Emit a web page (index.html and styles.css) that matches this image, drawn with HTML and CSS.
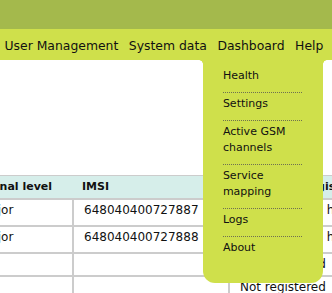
FILE: index.html
```html
<!DOCTYPE html>
<html lang="en">
<head>
    <meta charset="UTF-8">
    <meta name="viewport" content="width=device-width, initial-scale=1.0">
    <title>Channels</title>
    <link rel="stylesheet" href="styles.css">
</head>
<body>
<div class="topBar"></div>
<ul class="mainNav">
    <li class="navItem">User Management</li>
    <li class="navItem">System data</li>
    <li class="navItem hasMenu">Dashboard
        <ul class="dropMenu">
            <li class="dropItem">Health</li>
            <li class="dropItem">Settings</li>
            <li class="dropItem">Active GSM channels</li>
            <li class="dropItem">Service mapping</li>
            <li class="dropItem">Logs</li>
            <li class="dropItem">About</li>
        </ul>
    </li>
    <li class="navItem">Help</li>
</ul>
<div class="content">
    <table class="channelTable">
        <colgroup>
            <col class="colSignal">
            <col class="colImsi">
            <col class="colState">
        </colgroup>
        <tr>
            <th>Signal level</th>
            <th>IMSI</th>
            <th>Operators registration</th>
        </tr>
        <tr class="tallRow">
            <td>Major</td>
            <td>648040400727887</td>
            <td>Registered on home network</td>
        </tr>
        <tr class="tallRow">
            <td>Major</td>
            <td>648040400727888</td>
            <td>Registered on home network</td>
        </tr>
        <tr class="shortRow">
            <td></td>
            <td></td>
            <td>Not registered</td>
        </tr>
        <tr class="shortRow">
            <td></td>
            <td></td>
            <td>Not registered</td>
        </tr>
    </table>
</div>
</body>
</html>
```

FILE: styles.css
```css
body{
    margin: 0;
    background-color: white;
    font-family: "DejaVu Sans", Verdana, sans-serif;
    color: #111;
    overflow: hidden;
}
.topBar{
    height: 29px;
    background-color: #a4b94c;
}
.mainNav{
    display: flex;
    margin: 0;
    padding: 0;
    list-style: none;
    height: 31px;
    background-color: #cfe04b;
}
.navItem{
    position: relative;
    padding: 2px 5.5px 0 4.5px;
    margin-right: 0.5px;
    font-size: 12.4px;
    line-height: 29px;
    white-space: nowrap;
}
.dropMenu{
    position: absolute;
    z-index: 2;
    top: 31px;
    left: -10px;
    width: 79px;
    margin: 0;
    padding: 5px 21px 19px 20px;
    list-style: none;
    background-color: #cfe04b;
    border-radius: 0 0 12px 12px;
}
.dropMenu::before,
.dropMenu::after{
    content: "";
    position: absolute;
    top: 0;
    width: 4px;
    height: 4px;
}
.dropMenu::before{
    left: -4px;
    background: radial-gradient(circle at 0 100%, transparent 3.5px, #cfe04b 4px);
}
.dropMenu::after{
    right: -4px;
    background: radial-gradient(circle at 100% 100%, transparent 3.5px, #cfe04b 4px);
}
.dropItem{
    padding: 3px 0 8px 0;
    font-size: 11px;
    line-height: 16px;
    white-space: normal;
    border-bottom: 1px dotted #6f7150;
}
.dropItem:last-child{
    border-bottom: none;
}
.content{
    overflow: hidden;
    padding-top: 115px;
}
.channelTable{
    margin-left: -30px;
    table-layout: fixed;
    width: 420px;
    border-collapse: separate;
    border-spacing: 0;
}
.colSignal{
    width: 102px;
}
.colImsi{
    width: 156px;
}
.channelTable th{
    padding: 0 10px;
    font-size: 11px;
    line-height: 22px;
    text-align: left;
    white-space: nowrap;
    background-color: #d6eeea;
    border-top: 1px solid #cccccc;
    border-bottom: 2px solid #cccccc;
}
.channelTable td{
    padding: 0 10px;
    font-size: 12px;
    line-height: 20px;
    white-space: nowrap;
    overflow: hidden;
    border-bottom: 2px solid #cccccc;
}
.channelTable td + td{
    border-left: 2px solid #cccccc;
}
.tallRow td{
    padding-bottom: 5px;
}
.shortRow td{
    padding-bottom: 1px;
}
```
